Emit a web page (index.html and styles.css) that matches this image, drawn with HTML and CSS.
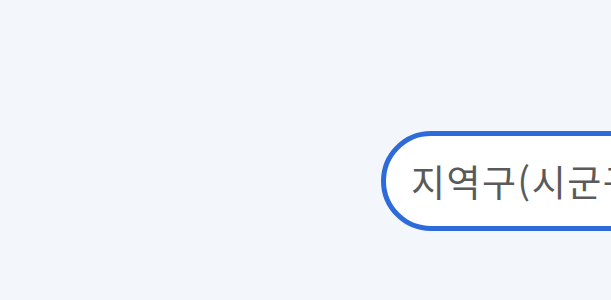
FILE: index.html
```html
<!DOCTYPE html>
<html lang="ko">
<head>
<meta charset="utf-8">
<link rel="stylesheet" href="styles.css">
</head>
<body>
<div class="page">
  <div class="search">
    <span class="label">지역구(시군구)를 입력하세요</span>
  </div>
</div>
</body>
</html>
```
FILE: styles.css
```css
html, body {
  margin: 0;
  padding: 0;
  background: #f3f6fa;
  overflow: hidden;
}
.page {
  width: 611px;
  height: 300px;
  box-sizing: border-box;
  padding: 131px 0 0 381px;
  overflow: hidden;
}
.search {
  width: 700px;
  height: 100px;
  box-sizing: border-box;
  border: 5px solid #2d6bdb;
  border-radius: 50px;
  background: #ffffff;
  display: flex;
  align-items: center;
  padding-left: 25px;
  white-space: nowrap;
}
.label {
  font-family: "Noto Sans CJK KR", "Noto Sans", sans-serif;
  font-size: 37px;
  font-weight: 400;
  color: #5a5a5a;
  letter-spacing: 1.5px;
}
```
